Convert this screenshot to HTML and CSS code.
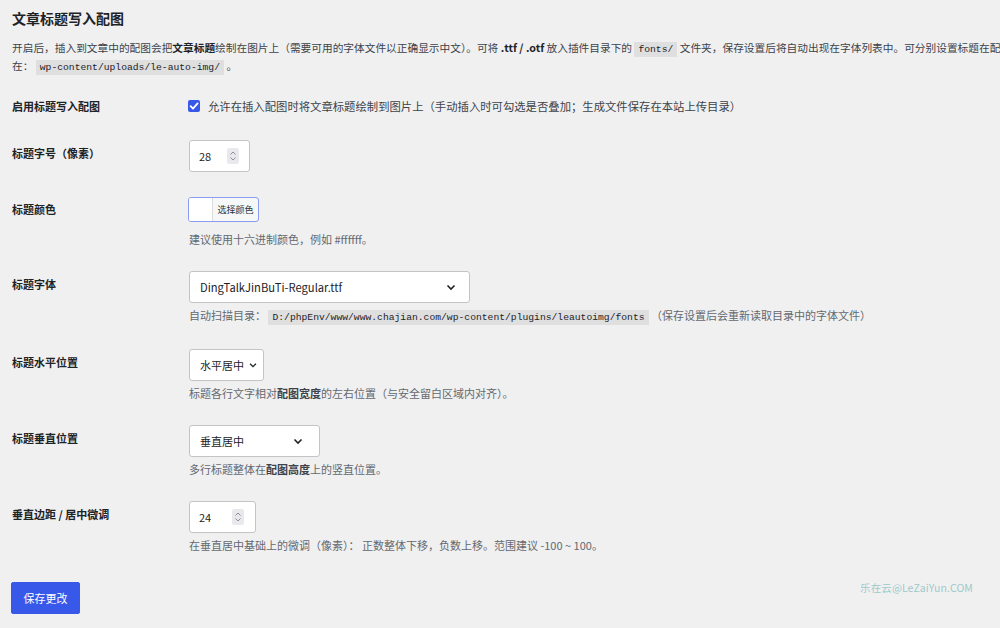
FILE: index.html
```html
<!DOCTYPE html>
<html lang="zh-CN">
<head>
    <meta charset="UTF-8">
    <meta name="viewport" content="width=device-width, initial-scale=1.0">
    <title>文章标题写入配图</title>
    <link rel="stylesheet" href="styles.css">
</head>
<body>
    <div class="wrap">
        <h2 class="section-title">文章标题写入配图</h2>
        <p class="intro">
            <span class="intro-line">开启后，插入到文章中的配图会把<strong>文章标题</strong>绘制在图片上（需要可用的字体文件以正确显示中文）。可将 <strong>.ttf / .otf</strong> 放入插件目录下的 <code>fonts/</code> 文件夹，保存设置后将自动出现在字体列表中。可分别设置标题在配图上的位置</span><br>
            在： <code>wp-content/uploads/le-auto-img/</code> 。
        </p>

        <form class="settings-form" onsubmit="return false;">
            <div class="form-row row-check">
                <div class="row-label">启用标题写入配图</div>
                <div class="row-field">
                    <label class="check-label">
                        <span class="checkbox"><svg viewBox="0 0 12 12" width="12" height="12"><path d="M2.6 6.2 L5 8.6 L9.6 3.4" fill="none" stroke="#fff" stroke-width="1.8" stroke-linecap="round" stroke-linejoin="round"/></svg></span>
                        允许在插入配图时将文章标题绘制到图片上（手动插入时可勾选是否叠加；生成文件保存在本站上传目录）
                    </label>
                </div>
            </div>

            <div class="form-row">
                <div class="row-label">标题字号（像素）</div>
                <div class="row-field">
                    <div class="number-input size-input">
                        <span class="number-value">28</span>
                        <span class="spinner"><svg viewBox="0 0 12 16" width="12" height="16"><path d="M3.5 6.5 L6 4 L8.5 6.5 M3.5 9.5 L6 12 L8.5 9.5" fill="none" stroke="#8c8f94" stroke-width="1"/></svg></span>
                    </div>
                </div>
            </div>

            <div class="form-row">
                <div class="row-label">标题颜色</div>
                <div class="row-field">
                    <button type="button" class="color-button">
                        <span class="color-swatch"></span>
                        <span class="color-text">选择颜色</span>
                    </button>
                    <p class="description color-desc">建议使用十六进制颜色，例如 #ffffff。</p>
                </div>
            </div>

            <div class="form-row">
                <div class="row-label">标题字体</div>
                <div class="row-field">
                    <div class="select select-font">
                        <span class="select-value latin">DingTalkJinBuTi-Regular.ttf</span>
                        <svg class="chevron" viewBox="0 0 12 12" width="12" height="12"><path d="M2.5 4.5 L6 8 L9.5 4.5" fill="none" stroke="#1d2327" stroke-width="1.6"/></svg>
                    </div>
                    <p class="description">自动扫描目录： <code>D:/phpEnv/www/www.chajian.com/wp-content/plugins/leautoimg/fonts</code> （保存设置后会重新读取目录中的字体文件）</p>
                </div>
            </div>

            <div class="form-row">
                <div class="row-label">标题水平位置</div>
                <div class="row-field">
                    <div class="select select-small">
                        <span class="select-value">水平居中</span>
                        <svg class="chevron" viewBox="0 0 12 12" width="10" height="10"><path d="M2.5 4.5 L6 8 L9.5 4.5" fill="none" stroke="#1d2327" stroke-width="1.6"/></svg>
                    </div>
                    <p class="description">标题各行文字相对<strong>配图宽度</strong>的左右位置（与安全留白区域内对齐）。</p>
                </div>
            </div>

            <div class="form-row">
                <div class="row-label">标题垂直位置</div>
                <div class="row-field">
                    <div class="select select-medium">
                        <span class="select-value">垂直居中</span>
                        <svg class="chevron" viewBox="0 0 12 12" width="12" height="12"><path d="M2.5 4.5 L6 8 L9.5 4.5" fill="none" stroke="#1d2327" stroke-width="1.6"/></svg>
                    </div>
                    <p class="description">多行标题整体在<strong>配图高度</strong>上的竖直位置。</p>
                </div>
            </div>

            <div class="form-row">
                <div class="row-label">垂直边距 / 居中微调</div>
                <div class="row-field">
                    <div class="number-input offset-input">
                        <span class="number-value">24</span>
                        <span class="spinner"><svg viewBox="0 0 12 16" width="12" height="16"><path d="M3.5 6.5 L6 4 L8.5 6.5 M3.5 9.5 L6 12 L8.5 9.5" fill="none" stroke="#8c8f94" stroke-width="1"/></svg></span>
                    </div>
                    <p class="description">在垂直居中基础上的微调（像素）： 正数整体下移，负数上移。范围建议 -100 ~ 100。</p>
                </div>
            </div>

            <div class="submit-row">
                <button type="submit" class="button-primary">保存更改</button>
                <span class="watermark">乐在云@LeZaiYun.COM</span>
            </div>
        </form>
    </div>
</body>
</html>
```

FILE: styles.css
```css
* {
    margin: 0;
    padding: 0;
    box-sizing: border-box;
}
html, body {
    background: #f0f0f1;
}
body {
    font-family: "Noto Sans CJK SC", "Noto Sans", sans-serif;
    color: #1d2327;
    font-size: 11px;
    overflow: hidden;
    height: 628px;
}
.wrap {
    padding: 0 12px;
}
.section-title {
    font-size: 14px;
    font-weight: 700;
    line-height: 18px;
    padding-top: 9px;
}
.intro {
    margin-top: 13px;
    font-size: 10.7px;
    line-height: 16px;
    color: #3c434a;
    white-space: nowrap;
}
.intro strong {
    color: #1d2327;
}
code {
    font-family: "Liberation Mono", "DejaVu Sans Mono", monospace;
    font-size: 9.7px;
    background: rgba(0, 0, 0, 0.07);
    padding: 2px 4px 2px;
    color: #1d2327;
}
.settings-form {
    margin-top: 10px;
}
.form-row {
    display: flex;
}
.row-label {
    width: 177px;
    flex-shrink: 0;
    font-weight: 700;
    line-height: 14px;
    padding-top: 18px;
}
.row-field {
    padding: 12px 0;
}
.row-check .row-label {
    padding-top: 13px;
}
.row-check .row-field {
    padding-bottom: 14px;
}
.check-label {
    display: flex;
    align-items: center;
    gap: 8px;
    line-height: 16px;
    font-size: 11.35px;
    color: #3c434a;
    margin-left: -1px;
}
.checkbox {
    width: 12px;
    height: 12px;
    border-radius: 2px;
    background: #3858e9;
    display: flex;
    align-items: center;
    justify-content: center;
}
.number-input {
    height: 32px;
    background: #fff;
    border: 1px solid #c3c4c7;
    border-radius: 3px;
    display: flex;
    align-items: center;
    justify-content: space-between;
    padding: 0 10px 0 9px;
}
.size-input {
    width: 61px;
}
.offset-input {
    width: 67px;
    padding-right: 11px;
}
.number-value {
    font-size: 11px;
    color: #1d2327;
}
.spinner {
    width: 12px;
    height: 16px;
    background: #e9e9ed;
    border-radius: 2px;
    display: flex;
}
.color-button {
    display: flex;
    height: 25px;
    width: 71px;
    margin-left: -1px;
    margin-top: 1px;
    border: 1px solid #8a9cf0;
    border-radius: 3px;
    background: #f6f7f7;
    overflow: hidden;
    font-family: inherit;
    cursor: pointer;
}
.color-swatch {
    width: 24px;
    height: 100%;
    background: #fff;
    border-right: 1px solid #dcdcde;
}
.color-text {
    flex: 1;
    font-size: 9px;
    line-height: 23px;
    color: #2c3338;
    text-align: center;
}
.description {
    margin-top: 5px;
    font-size: 11px;
    line-height: 15px;
    color: #646970;
}
.description strong {
    color: #3c434a;
}
.color-desc {
    margin-top: 10px;
}
.select {
    height: 32px;
    background: #fff;
    border: 1px solid #c3c4c7;
    border-radius: 3px;
    display: flex;
    align-items: center;
    justify-content: space-between;
    padding: 0 10px;
}
.select-value {
    font-size: 11px;
    color: #1d2327;
}
.select-value.latin {
    font-size: 11.2px;
}
.select-font {
    width: 281px;
    padding-right: 12px;
}
.select-small {
    width: 75px;
    padding-right: 5px;
}
.select-medium {
    width: 131px;
    padding-right: 15px;
}
.chevron {
    flex-shrink: 0;
}
.submit-row {
    display: flex;
    justify-content: space-between;
    align-items: flex-start;
    margin-top: 17px;
}
.button-primary {
    width: 69px;
    height: 32px;
    margin-left: -1px;
    background: #3858e9;
    color: #fff;
    border: 1px solid #3858e9;
    border-radius: 2px;
    font-family: inherit;
    font-size: 11px;
    cursor: pointer;
}
.watermark {
    margin-right: 15px;
    font-size: 10.5px;
    line-height: 12px;
    color: #9ccaca;
    letter-spacing: 0.1px;
}
```
